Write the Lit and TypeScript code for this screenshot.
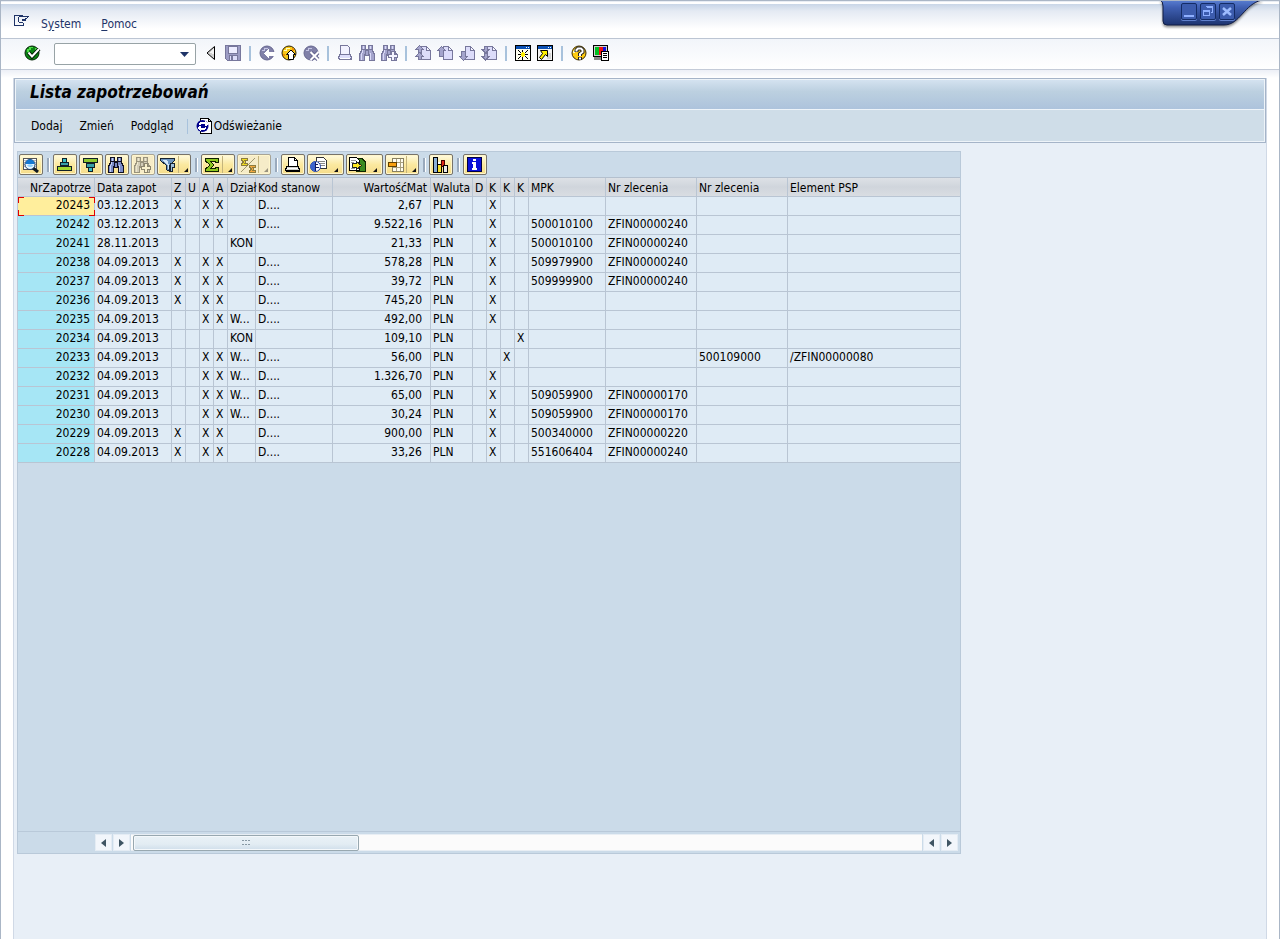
import { LitElement, html, css, svg, nothing, TemplateResult } from "lit";
import { customElement, property } from "lit/decorators.js";

const page = (fill: string, line: string) => svg`
  <path d="M6.500 1.500h5l4 4v9h-9z" fill=${fill} stroke=${line}/>
  <path d="M11.500 1.500v4h4z" fill="#f6f6ff" stroke=${line}/>`;

const binoculars = (fill: string, dark: string, light: string) => svg`
  <path d="M2 0h5v4h2V0h5v5l2 4v7h-6v-5H6v5H0V9l2-4z" fill=${dark}/>
  <path d="M3 1h3v3H3zM10 1h3v3h-3zM3 5h3v4H5v6H1V9h1V7h1zM10 5h3v2h1v2h1v6h-4V9h-1zM7 6h2v4H7z" fill=${fill}/>
  <path d="M3 5h1v3H3zM2 8h1v7H2zM11 8h1v7h-1zM4 1h1v3H4zM11 1h1v3h-1z" fill=${light}/>`;

const smallPlus = (fill: string, line: string) => svg`
  <path d="M10.500 6.500h3v3h3v3h-3v3h-3v-3h-3v-3h3z" fill=${fill} stroke=${line}/>`;

const ball = (fill: string, edge: string) => svg`
  <circle cx="8" cy="8" r="7" fill=${fill} stroke=${edge} shape-rendering="auto"/>`;

const LILAC = "#dcdcfa";
const GREY = "#77779c";

const icons: Record<string, TemplateResult> = {
  menu: svg`<path d="M10 3.500H1.500v10h9V11" fill="none" stroke="#1f3468"/>
    <path d="M15.500 4.500H6.500l-1 1v4l1 1h3.500M15 5l-3 2.500H8.500M9 8.500h4" fill="none" stroke="#1f3468"/>`,
  check: svg`<circle cx="8" cy="8" r="7" fill="#0c8414" stroke="#042406" shape-rendering="auto"/>
    <path d="M3 4h2V2h4v1H7v2H5v2H3zM11 3h2v2h-2z" fill="#4cdc44"/>
    <g shape-rendering="auto" fill="none"><path d="M4.500 7.500l3.500 4 7-7.500" stroke="#021a04" stroke-width="4"/>
    <path d="M4.500 7.500l3.500 4 7-7.500" stroke="#fff" stroke-width="2"/></g>`,
  collapse: svg`<path d="M11.500 1.500v13L4 8z" fill="#d0d0d0" stroke="#000" shape-rendering="auto"/><path d="M10.500 4v5L7 8z" fill="#f4f4f4"/>`,
  save: svg`<path d="M.500.500h15v15H2.500l-2-2z" fill="#9c9cc4" stroke=${GREY}/>
    <path d="M3.500 1h9v7h-9z" fill="#ececff" stroke=${GREY}/>
    <path d="M4.500 10.500h8v5h-8z" fill=${LILAC} stroke=${GREY}/><path d="M6 11h2v4H6z" fill=${GREY}/>`,
  back: svg`${ball("#8080a8", "#666690")}<path d="M3 5h2V3h4v1H6v2H3z" fill="#c4c4e4"/>
    <path d="M5 8.500l5-5v3h6v4h-6v3z" fill="#fff"/>`,
  exit: svg`${ball("#f8c818", "#2c2000")}<path d="M3 5h2V3h4v1H6v2H3z" fill="#fffcc0"/><path d="M11 3h2v3h-2zM2 9h2v2H2z" fill="#f09000"/>
    <path d="M10 5l-4.500 4.500h2v5h5v-5h2z" fill="#fff" stroke="#000" shape-rendering="auto"/>`,
  cancel: svg`${ball("#8080a8", "#666690")}<path d="M3 5h2V3h4v1H6v2H3z" fill="#c4c4e4"/>
    <g shape-rendering="auto"><path d="M8 7.500l7 7M15 7.500l-7 7" stroke="#666690" stroke-width="4"/><path d="M7.500 7l8 8M15.500 7l-8 8" stroke="#fff" stroke-width="2"/></g>`,
  printOff: svg`<path d="M3.500 9.500v-9h7l2 2v7" fill="#f2f2ff" stroke=${GREY}/>
    <path d="M2.500 9.500h11l1 4h-13z" fill=${LILAC} stroke=${GREY}/><path d="M2 13h13v2H2z" fill=${GREY}/><path d="M3 13h10v1H3z" fill="#fff"/>`,
  findOff: binoculars("#a4a4cc", GREY, "#dadaf8"),
  findNextOff: svg`${binoculars("#a4a4cc", GREY, "#dadaf8")}${smallPlus("#f4f4ff", GREY)}`,
  first: svg`${page(LILAC, GREY)}<path d="M4.500 .500L1 4h2v3h3V4h2zM4.500 7.500L1 11h2v3h3v-3h2z" fill="#a4a4cc" stroke=${GREY}/>`,
  prev: svg`${page(LILAC, GREY)}<path d="M4.500 1.500L.500 5.500h2v6h4v-6h2z" fill="#a4a4cc" stroke=${GREY}/>`,
  next: svg`${page(LILAC, GREY)}<path d="M4.500 15.500l-4-4h2v-5h4v5h2z" fill="#a4a4cc" stroke=${GREY}/>`,
  last: svg`${page(LILAC, GREY)}<path d="M4.500 8L1 4.500h2v-3h3v3h2zM4.500 15L1 11.500h2v-3h3v3h2z" fill="#a4a4cc" stroke=${GREY}/>`,
  session: svg`<path d="M.500.500h15v15H.500z" fill="#fffff0" stroke="#000"/><path d="M1 1h14v3H1z" fill="#0a50b4"/>
    <path d="M11 2h1v1h-1zM13 2h1v1h-1z" fill="#fff"/>
    <path d="M6 8h4v3H6zM7 7h2v5H7z" fill="#fff000"/>
    <path d="M7 5h1v2H7zM7 12h1v3H7zM3 9h3v1H3zM10 9h3v1h-3zM3 5h1v1h1v1h1v1H5V7H4V6H3zM12 5h1v1h-1v1h-1v1h-1V7h1V6h1zM3 13h1v-1h1v-1h1v1H5v1H4v1H3zM12 13h-1v-1h-1v-1h1v1h1v1h1v1h-1z" fill="#000"/>`,
  shortcut: svg`<path d="M.500.500h15v15H.500z" fill="#f4f4f4" stroke="#000"/><path d="M1 1h14v3H1z" fill="#0a50b4"/>
    <path d="M11 2h1v1h-1zM13 2h1v1h-1z" fill="#fff"/><path d="M10 8h4v6h-4z" fill="#d4d4d4"/>
    <path d="M3.500 5.500h7v6l-2-2-4 5-2-2 3-4z" fill="#fff000" stroke="#000" shape-rendering="auto"/>`,
  help: svg`${ball("#ffcc10", "#3c2c00")}<path d="M2 6h1V4h2V3h2v1H5v2H4v2H2z" fill="#fffcc0"/>
    <g shape-rendering="auto" fill="none"><path d="M5.500 7V5L7 3.500h3L11.500 5v2L9 9v2M9 12v3" stroke="#222" stroke-width="4"/>
    <path d="M5.500 6.500V5L7 3.500h3L11.500 5v2L9 9v2M9 12.500v2" stroke="#fff" stroke-width="2"/></g>`,
  layout: svg`<path d="M.500.500h14v11H.500z" fill="#d0d0d0" stroke="#000"/><path d="M2 2h4v8H2z" fill="#00c020"/><path d="M6 2h4v8H6z" fill="#f01010"/><path d="M10 2h3v8h-3z" fill="#1010e0"/>
    <path d="M1 12h8v3H1z" fill="#888"/><path d="M8.500 6.500h7v9h-7z" fill="#fff" stroke="#000"/><path d="M10 8.500h4M10 10.500h4M10 12.500h4" stroke="#000"/>`,
  refresh: svg`<path d="M4.500.500h8l3 3v12h-11z" fill="#fff" stroke="#000"/><path d="M12.500 1v2.500h3" fill="#ccc" stroke="#000"/>
    <circle cx="6.500" cy="8" r="6" fill="#00008c" shape-rendering="auto"/>
    <path d="M3 5h1V4h5V3h1v1h1v1h1v2h-1v1H9V6H5v1H3zM10 11H9v1H5v1H4v-1H3v-1H2V9h1V8h2v2h4V9h1z" fill="#fff"/>`,
  detail: svg`<path d="M1.500 1.500h13v11h-13z" fill="#fff" stroke="#555"/><path d="M2 3.500h12M2 5.500h12M2 7.500h12M2 9.500h12" stroke="#b4bcc4"/>
    <g shape-rendering="auto"><path d="M11 11l5 4" stroke="#101820" stroke-width="3"/>
    <circle cx="8" cy="7.500" r="5" fill="#e8f6ff" stroke="#1c3c68"/><path d="M3.500 7a4.500 4.500 0 0 1 9 0z" fill="#1478d2"/><path d="M5 8.500q3-2.500 6.500 0q-3 3-6.500 0" fill="#8fd0ff"/></g>`,
  asc: svg`<path d="M6.500 1.500h4v4h-4z" fill="#38c0c8" stroke="#102028"/><path d="M4.500 5.500h8v3h-8z" fill="#38a0a8" stroke="#102028"/>
    <path d="M1.500 9.500h14v4h-14z" fill="#a4d830" stroke="#102028"/>`,
  desc: svg`<path d="M1.500 1.500h14v4h-14z" fill="#8cc830" stroke="#102028"/><path d="M4.500 6.500h8v4h-8z" fill="#38a0a8" stroke="#102028"/>
    <path d="M6.500 10.500h4v4h-4z" fill="#38c0c8" stroke="#102028"/>`,
  find: binoculars("#7c8cc8", "#101020", "#c4d0f4"),
  findNext: svg`${binoculars("#d2ccb8", "#99937c", "#eee8cc")}${smallPlus("#f8f0cc", "#8c866e")}`,
  filter: svg`<path d="M.500 1.500h14v2l-5 5v6l-3-2v-4l-6-5z" fill="#6c94c0" stroke="#182430"/><path d="M2 3h5l2 5v4H8V8z" fill="#d4e8f8"/>
    <path d="M10.500 6.500h4v4h-2v4h-2z" fill="#a0c0dc" stroke="#182430"/>`,
  sum: svg`<path d="M1.500 1.500h13v4h-3v-1h-5l3.500 3.500-3.500 3.500h5v-1h3v4h-13v-2.500L6 8 1.500 4z" fill="#8cc820" stroke="#102000"/>`,
  subtotal: svg`<path d="M1 15L15 1" stroke="#a09870" shape-rendering="auto"/>
    <path d="M1.500 1.500h6v2h-3l1.500 1.500-1.500 1.500h3v2h-6v-1.500l2-2-2-2z" fill="#f0dc20" stroke="#8c7c40"/>
    <path d="M9.500 8.500h6v2h-3l1.500 1.500-1.500 1.500h3v2h-6v-1.500l2-2-2-2z" fill="#f4a840" stroke="#8c7c40"/>`,
  print: svg`<path d="M4.500 9.500v-9h6l3 3v6" fill="#fff" stroke="#000"/><path d="M10.500 1v2.500h3" fill="none" stroke="#000"/>
    <path d="M2.500 9.500h12l1 4h-14z" fill="#d4d4cc" stroke="#000"/><path d="M2 13h14v2H2z" fill="#000"/><path d="M3 11h11v1H3z" fill="#fff"/>`,
  views: svg`<path d="M6.500.500h7l3 3v8h-10z" fill="#fff" stroke="#333"/><path d="M8 4.500h7M8 6.500h7M8 8.500h7" stroke="#888"/>
    <g shape-rendering="auto"><circle cx="5.500" cy="9.500" r="5" fill="#fff" stroke="#2040a0"/><path d="M5.500 4.500a5 5 0 0 0 0 10z" fill="#3c64cc"/></g>
    <path d="M5 5h1v9H5zM6 7h2v1H6zM6 10h3v1H6z" fill="#101c60"/>`,
  exportTo: svg`<path d="M5 1.500h8l3 3v10H8z" fill="#3c8c20" stroke="#102800"/><path d="M.500.500h7l3 3v10H.500z" fill="#fff" stroke="#000"/>
    <path d="M2 3.500h5M2 5.500h3M2 11.500h4" stroke="#999"/><path d="M3.500 6.500h4v-2l5 4-5 4v-2h-4z" fill="#ffe820" stroke="#222"/>`,
  columns: svg`<path d="M4.500 1.500h11v13h-11z" fill="#fffdf0" stroke="#888060"/><path d="M8.500 2v12M12.500 2v12M5 5.500h10M5 10.500h10" stroke="#a8a080"/>
    <path d="M.500 5.500h8v4h-8z" fill="#f8a010" stroke="#604000"/>`,
  chart: svg`<path d="M1.500.500h4v15h-4z" fill="#8cb0d8" stroke="#000"/><path d="M5.500 7.500h4v8h-4z" fill="#f8e030" stroke="#000"/><path d="M6 5h2v2H6z" fill="#fff"/>
    <path d="M9.500 3.500h3v6h-3z" fill="#e02818" stroke="#400"/><path d="M11.500 8.500h4v7h-4z" fill="#e8e8e8" stroke="#000"/>`,
  info: svg`<path d="M1.500.500h14v14h-14z" fill="#0a10d8" stroke="#000040"/><path d="M7 2h3v2H7zM6 5h4v6h1v2H6v-2h1V7H6z" fill="#fff"/>`,
};

const icon = (name: string) => html`
  <svg class="icon" width="17" height="16" viewBox="0 0 17 16" shape-rendering="crispEdges" aria-hidden="true">${icons[name]}</svg>`;

const iconStyles = css`
  * { box-sizing: border-box; }
  .icon { display: block; flex: none; }
  button { font: inherit; color: inherit; margin: 0; padding: 0; border: 0; background: none; }
`;

@customElement("sap-window-controls")
class WindowControls extends LitElement {
  static styles = css`
    :host { display: block; position: absolute; top: -1px; right: 15px; width: 104px; height: 30px; }
    .tab { display: block; filter: drop-shadow(0 2px 1px #0006); }
    .buttons { position: absolute; top: 3px; left: 21px; display: flex; gap: 3px; }
    button { width: 16px; height: 17px; padding: 0; border: 1px solid #142c66; border-radius: 2px; background: #3c5cae; box-shadow: 0 1px 0 #6080cc; }
    svg { display: block; }
  `;
  render() {
    return html`
      <svg class="tab" width="104" height="30" viewBox="0 0 104 30" aria-hidden="true">
        <defs><linearGradient id="g" x1="0" y1="0" x2="0" y2="1">
          <stop offset="0" stop-color="#5a7fd2"/><stop offset=".3" stop-color="#3f5fb2"/><stop offset="1" stop-color="#1d3470"/>
        </linearGradient></defs>
        <path d="M0 0Q3 1 3 6V21Q3 25 7 25H64C80 25 84 4 102 0Z" fill="url(#g)" stroke="#101c44"/>
      </svg>
      <div class="buttons">
        <button aria-label="Minimalizuj"><svg width="14" height="15"><path d="M2 11h10v2H2z" fill="#8fb0ff"/></svg></button>
        <button aria-label="Przywróć"><svg width="14" height="15" shape-rendering="crispEdges"><path d="M5 2h7v7h-2V8h1V4H6V3H5zM2 6h7v6H2zM3 8v3h5V8z" fill="#8fb0ff" fill-rule="evenodd"/></svg></button>
        <button aria-label="Zamknij"><svg width="14" height="15"><path d="M3 4l8 7M11 4l-8 7" stroke="#9dbcff" stroke-width="2.500"/></svg></button>
      </div>`;
  }
}

@customElement("sap-grid-toolbar")
class GridToolbar extends LitElement {
  static styles = [iconStyles, css`
    :host { display: flex; align-items: center; gap: 2px; height: 25px; padding: 0 1px; }
    .tool { display: flex; align-items: center; height: 21px; min-width: 24px; padding: 0 3px 0 2px; border: 1px solid #77736a;
      border-radius: 2px; background: linear-gradient(#fffbe0, #fbe9a0 50%, #f5dc8a); box-shadow: inset 0 0 0 1px #fff6cc; }
    .tool.menu { padding-right: 2px; }
    .tool.wide { padding-right: 5px; }
    .tool:disabled { border-color: #a8a496; background: #f6ecc8; }
    .arrow { width: 0; height: 0; margin: 10px 0 0 7px; border: 2px solid; border-color: transparent #111 #111 transparent; }
    .split { width: 1px; height: 17px; margin-left: 1px; background: #c4b47c; }
    .split + .arrow { margin-left: 5px; }
    .tool:disabled .arrow { opacity: .4; }
    .sep { width: 6px; height: 14px; display: flex; justify-content: center; }
    .sep::before { content: ""; width: 2px; background: #9aaabd; border-right: 1px solid #fff; }
  `];
  tools: (null | [string, string, string?, boolean?])[] = [
    ["detail", "Szczegóły"], null, ["asc", "Sortuj rosnąco"], ["desc", "Sortuj malejąco"], ["find", "Szukaj"],
    ["findNext", "Szukaj dalej", "", true], ["filter", "Filtr", "split"], null, ["sum", "Suma", "split"],
    ["subtotal", "Suma częściowa", "split", true], null, ["print", "Drukuj"], ["views", "Widoki", "wide"],
    ["exportTo", "Eksport", "wide"], ["columns", "Układ", "split"], null, ["chart", "Grafika"], null, ["info", "Informacje"],
  ];
  render() {
    return this.tools.map((t) => t === null ? html`<span class="sep"></span>` : html`
      <button class="tool ${t[2] ? "menu" : ""} ${t[2] === "wide" ? "wide" : ""}" aria-label=${t[1]} ?disabled=${t[3] ?? false}>
        ${icon(t[0])}
        ${t[2] === "split" ? html`<span class="split"></span>` : nothing}
        ${t[2] ? html`<span class="arrow"></span>` : nothing}
      </button>`);
  }
}

interface Column { title: string; width?: number; right?: boolean; }

@customElement("sap-grid")
class Grid extends LitElement {
  static styles = [iconStyles, css`
    :host { display: flex; flex-direction: column; width: 944px; max-width: 100%; border: 1px solid #b9c9d9; background: #cbdbe9; }
    .body { flex: 1; border-top: 1px solid #b4c0ce; overflow: hidden; }
    table { width: 100%; table-layout: fixed; border-collapse: separate; border-spacing: 0; }
    th, td { height: 19px; padding: 0 0 2px 2px; overflow: hidden; white-space: nowrap; text-align: left; font-weight: 400; line-height: 16px;
      border-right: 1px solid #b9c5d3; border-bottom: 1px solid #b9c5d3; color: #000; }
    th { padding: 2px 0 0 2px; overflow: visible; background: linear-gradient(#dde1e6, #d0d5dc 50%, #d9dde2); }
    td { background: #dfebf5; }
    .right { text-align: right; padding-right: 8px; }
    th.right { padding-right: 3px; }
    .key { padding-right: 4px; background: #a6e6f5; }
    tr > :last-child { border-right: 0; }
    .current { position: relative; background: #ffee9c; overflow: visible; }
    .current::after { content: ""; position: absolute; inset: 0 -1px -1px 0;
      background: linear-gradient(#e00000 0 0) 0 0 / 6px 1px, linear-gradient(#e00000 0 0) 0 0 / 1px 6px,
        linear-gradient(#e00000 0 0) 100% 0 / 6px 1px, linear-gradient(#e00000 0 0) 100% 0 / 1px 6px,
        linear-gradient(#e00000 0 0) 0 100% / 6px 1px, linear-gradient(#e00000 0 0) 0 100% / 1px 6px,
        linear-gradient(#e00000 0 0) 100% 100% / 6px 1px, linear-gradient(#e00000 0 0) 100% 100% / 1px 6px;
      background-repeat: no-repeat; }
    .scroll { display: flex; align-items: center; gap: 1px; height: 22px; padding: 0 2px 0 77px; border-top: 1px solid #b9c9d9; }
    .step { display: flex; align-items: center; justify-content: center; width: 17px; height: 17px; background: #f2f6fb; border: 1px solid #e4ecf4; }
    .track { flex: 1; height: 17px; padding: 0 2px; background: #fbfbfb; border: 1px solid #e8eef4; border-width: 1px 0; }
    .thumb { display: flex; align-items: center; justify-content: center; width: 226px; height: 16px; border: 1px solid #98a8b0; border-radius: 2px;
      background: linear-gradient(#eaf2f7, #e2ecf3 60%, #cfdeea); box-shadow: inset 0 0 0 1px #f4f8fb; }
  `];
  @property({ attribute: false }) columns: Column[] = [
    { title: "NrZapotrze", width: 77, right: true }, { title: "Data zapot", width: 77 }, { title: "Z", width: 14 }, { title: "U", width: 14 },
    { title: "A", width: 14 }, { title: "A", width: 14 }, { title: "Dział", width: 28 }, { title: "Kod stanow", width: 77 },
    { title: "WartośćMat", width: 98, right: true }, { title: "Waluta", width: 42 }, { title: "D", width: 14 }, { title: "K", width: 14 },
    { title: "K", width: 14 }, { title: "K", width: 14 }, { title: "MPK", width: 77 }, { title: "Nr zlecenia", width: 91 },
    { title: "Nr zlecenia", width: 91 }, { title: "Element PSP" },
  ];
  @property({ attribute: false }) rows: string[] = [
    "20243|03.12.2013|X||X|X||D....|2,67|PLN||X||||||",
    "20242|03.12.2013|X||X|X||D....|9.522,16|PLN||X|||500010100|ZFIN00000240||",
    "20241|28.11.2013|||||KON||21,33|PLN||X|||500010100|ZFIN00000240||",
    "20238|04.09.2013|X||X|X||D....|578,28|PLN||X|||509979900|ZFIN00000240||",
    "20237|04.09.2013|X||X|X||D....|39,72|PLN||X|||509999900|ZFIN00000240||",
    "20236|04.09.2013|X||X|X||D....|745,20|PLN||X||||||",
    "20235|04.09.2013|||X|X|W...|D....|492,00|PLN||X||||||",
    "20234|04.09.2013|||||KON||109,10|PLN||||X||||",
    "20233|04.09.2013|||X|X|W...|D....|56,00|PLN|||X||||500109000|/ZFIN00000080",
    "20232|04.09.2013|||X|X|W...|D....|1.326,70|PLN||X||||||",
    "20231|04.09.2013|||X|X|W...|D....|65,00|PLN||X|||509059900|ZFIN00000170||",
    "20230|04.09.2013|||X|X|W...|D....|30,24|PLN||X|||509059900|ZFIN00000170||",
    "20229|04.09.2013|X||X|X||D....|900,00|PLN||X|||500340000|ZFIN00000220||",
    "20228|04.09.2013|X||X|X||D....|33,26|PLN||X|||551606404|ZFIN00000240||",
  ];
  step(left: boolean) {
    return html`<button class="step" aria-label=${left ? "W lewo" : "W prawo"}>
      <svg width="5" height="8" viewBox="0 0 5 8"><path d=${left ? "M5 0v8L0 4z" : "M0 0v8l5-4z"} fill="#3f5563"/></svg></button>`;
  }
  render() {
    return html`
      <sap-grid-toolbar></sap-grid-toolbar>
      <div class="body">
        <table>
          <colgroup>${this.columns.map((c) => html`<col width=${c.width ?? nothing}>`)}</colgroup>
          <thead><tr>${this.columns.map((c) => html`<th scope="col" class=${c.right ? "right" : ""}>${c.title}</th>`)}</tr></thead>
          <tbody>${this.rows.map((row, r) => html`<tr>${row.split("|").map((value, i) => html`
            <td class="${this.columns[i].right ? "right" : ""} ${i === 0 ? "key" : ""} ${r + i === 0 ? "current" : ""}">${value}</td>`)}</tr>`)}
          </tbody>
        </table>
      </div>
      <div class="scroll">
        ${this.step(true)}${this.step(false)}
        <div class="track"><div class="thumb">
          <svg width="9" height="6" shape-rendering="crispEdges"><path d="M0 0h2v1H0zM3 0h2v1H3zM6 0h2v1H6zM0 4h2v1H0zM3 4h2v1H3zM6 4h2v1H6z" fill="#8899a4"/></svg>
        </div></div>
        ${this.step(true)}${this.step(false)}
      </div>`;
  }
}

@customElement("app-root")
class AppRoot extends LitElement {
  static styles = [iconStyles, css`
    :host { display: flex; flex-direction: column; position: relative; box-sizing: border-box; min-height: 100vh; overflow: hidden; background: #fff; color: #000;
      border: 1px solid #aab6c6; border-bottom: 0; font: 12px/16px "DejaVu Sans Condensed", "DejaVu Sans", sans-serif; }
    .menubar { display: flex; align-items: center; height: 38px; padding: 8px 12px 0; color: #1f3468; border-bottom: 1px solid #bcc5d3;
      background: linear-gradient(#e8edf4 0 1px, #fff 1px 3px, #c9d6e7 3px, #e4eaf3 10px, #fff 28px); }
    .menubar .icon { margin: -8px 11px 0 0; }
    .menubar button { margin-right: 20px; }
    .menubar u { text-underline-offset: 2px; }
    .toolbar { display: flex; align-items: center; height: 31px; padding: 0 20px 2px; border-bottom: 1px solid #c4cbd8; background: linear-gradient(#f2f5fa, #fff); }
    .tool { display: flex; justify-content: center; width: 22px; }
    .sep { width: 12px; height: 15px; display: flex; justify-content: center; }
    .sep::before { content: ""; width: 2px; background: #a8c2dc; }
    .command { display: flex; align-items: center; width: 142px; height: 22px; margin: 2px 4px 0 11px; border: 1px solid #98a3a6; border-radius: 2px; background: #fff; }
    .command input { flex: 1; min-width: 0; height: 18px; padding: 0 4px; border: 0; outline: 0; font: inherit; background: none; }
    .command button { padding: 0 6px; }
    .command svg { display: block; }
    .stage { flex: 1; display: flex; flex-direction: column; padding: 8px 12px 0 12px; background: linear-gradient(#eceff6, #fff 8px); }
    .panel { flex: 1; display: flex; flex-direction: column; border: 1px solid #d0d9e6; border-width: 0 1px; background: #e8eff7; }
    .head { border: 1px solid #a5b4c8; box-shadow: inset 0 0 0 1px #eef4f9; background: #cfdde8; }
    h1 { margin: 1px 1px 0; height: 29px; padding: 0 14px; font-size: 17px; line-height: 24px; font-weight: 700; font-style: italic;
      background: linear-gradient(#d4e2f0, #bcd0e0 40%, #adc3dc); }
    .actions { display: flex; align-items: center; gap: 17px; height: 33px; padding: 0 16px; border-top: 1px solid #eef4f9; }
    .actions .sep { width: 1px; margin: 0 -9px 0 -4px; }
    .actions button { display: flex; align-items: center; gap: 1px; }
    sap-grid { flex: 1; margin: 8px 0 85px 3px; }
  `];
  tools: (null | [string, string])[] = [
    ["collapse", "Zwiń"], ["save", "Zapisz"], null, ["back", "Wstecz"], ["exit", "Zakończ"], ["cancel", "Anuluj"], null,
    ["printOff", "Drukuj"], ["findOff", "Szukaj"], ["findNextOff", "Szukaj dalej"], null,
    ["first", "Pierwsza strona"], ["prev", "Poprzednia strona"], ["next", "Następna strona"], ["last", "Ostatnia strona"], null,
    ["session", "Nowy tryb"], ["shortcut", "Skrót"], null, ["help", "Pomoc"], ["layout", "Dopasowanie układu"],
  ];
  render() {
    return html`
      <nav class="menubar">
        ${icon("menu")}
        <button>S<u>y</u>stem</button>
        <button><u>P</u>omoc</button>
      </nav>
      <sap-window-controls></sap-window-controls>
      <div class="toolbar">
        <button class="tool" aria-label="Wykonaj">${icon("check")}</button>
        <div class="command">
          <input type="text" aria-label="Polecenie">
          <button aria-label="Lista poleceń"><svg width="9" height="5"><path d="M0 0h9L4.500 5z" fill="#1f3468"/></svg></button>
        </div>
        ${this.tools.map((t) => t ? html`<button class="tool" aria-label=${t[1]}>${icon(t[0])}</button>` : html`<span class="sep"></span>`)}
      </div>
      <main class="stage">
        <div class="panel">
          <header class="head">
            <h1>Lista zapotrzebowań</h1>
            <div class="actions">
              <button>Dodaj</button><button>Zmień</button><button>Podgląd</button>
              <span class="sep"></span>
              <button>${icon("refresh")}Odświeżanie</button>
            </div>
          </header>
          <sap-grid></sap-grid>
        </div>
      </main>`;
  }
}
